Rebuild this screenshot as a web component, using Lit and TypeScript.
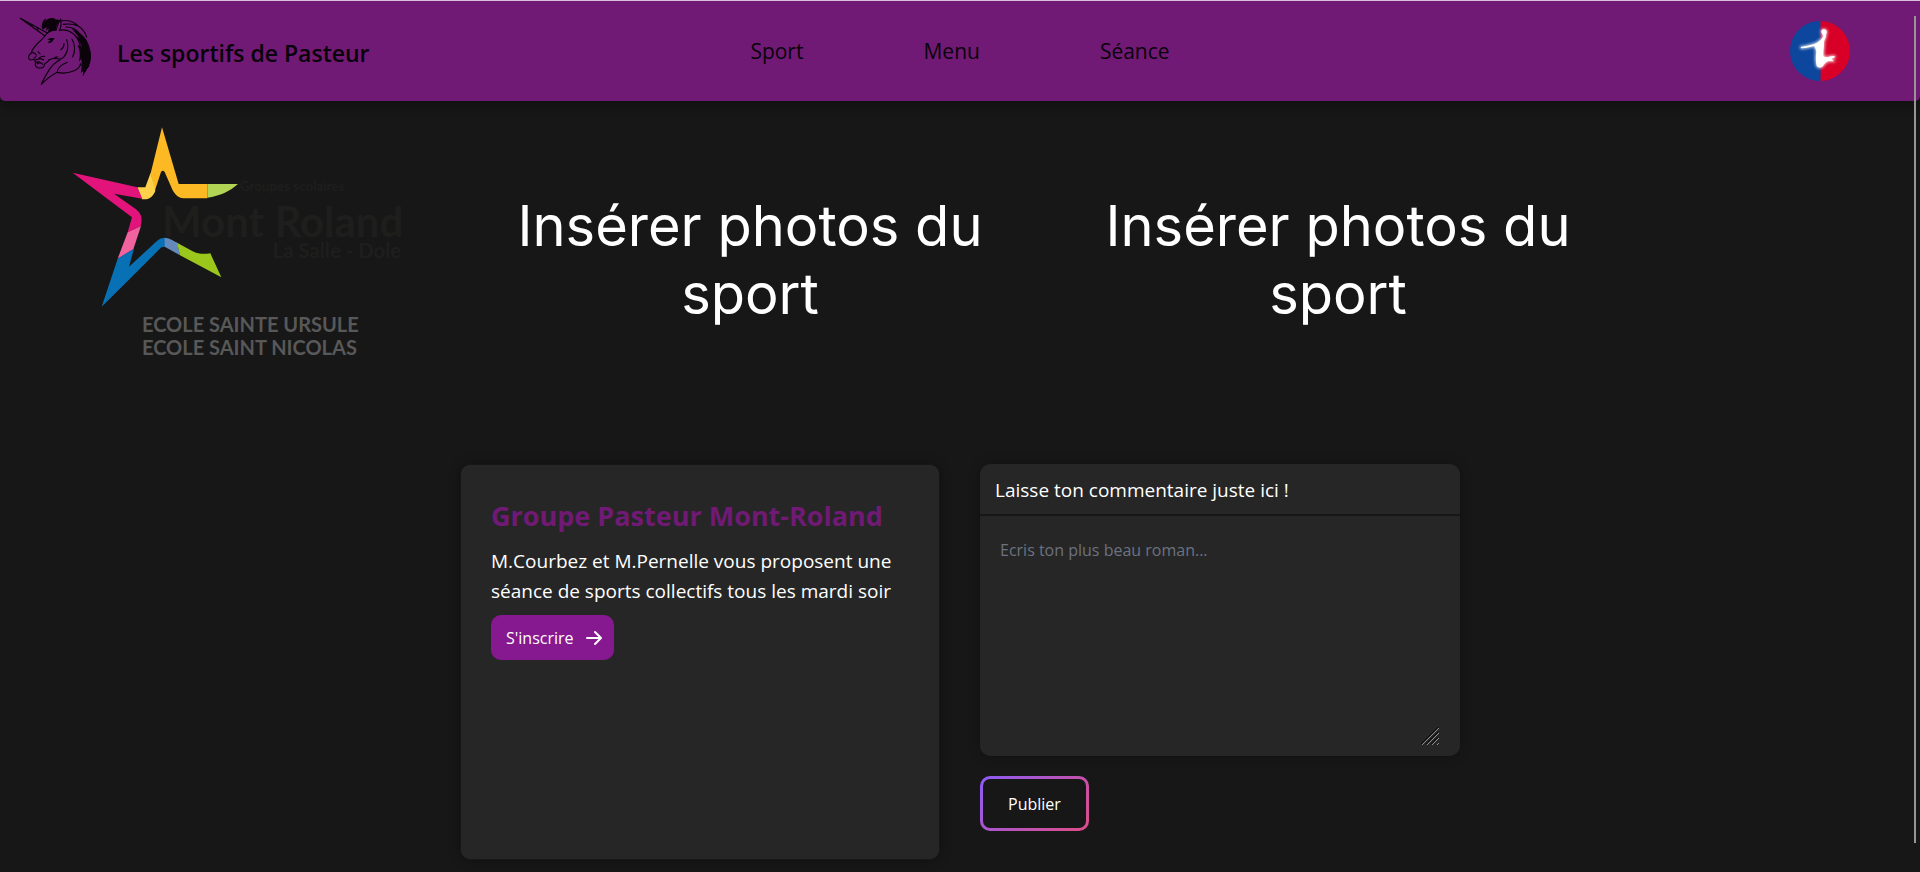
import { LitElement, html, css, svg } from "lit";
import { customElement, property } from "lit/decorators.js";

const unicorn = svg`
  <g fill="none" stroke="#0b020c" stroke-width="3.4" stroke-linecap="round" stroke-linejoin="round">
    <path d="M31 28 L112 72 M31 28 L104 80 M62 44 L66 52 M80 54 L84 64" />
    <path d="M112 72 C104 84 96 92 84 102 C74 112 66 122 64 132 C58 136 54 142 57 150 C62 154 66 154 71 151 C76 153 78 156 76 162 C74 170 79 176 87 177 C97 178 105 174 103 166 C109 162 114 158 118 152" />
    <path d="M64 132 C70 130 76 132 79 138 M84 128 L90 134 M88 146 C94 143 98 141 104 142 M79 152 C86 149 94 149 101 152 M82 164 C88 160 95 161 98 166" />
    <path d="M112 72 C120 66 128 62 138 64 M138 64 C142 50 146 38 152 30 C154 42 154 54 148 64" />
    <path d="M148 64 C164 60 180 66 192 76 C205 88 212 108 214 130" />
    <path d="M118 152 C128 146 140 148 152 150 C160 148 164 142 166 136 M170 92 C176 110 172 128 166 138 M152 122 C158 118 162 112 162 104" />
    <path d="M186 90 C196 108 196 126 188 144" />
    <path d="M150 152 C136 160 126 168 118 182 C108 198 100 212 94 226 C110 210 126 198 142 190" />
    <path d="M142 190 C158 194 176 192 190 186 C202 182 210 174 212 164 M172 160 C152 168 142 178 142 190" />
    <path d="M150 36 C172 32 192 38 206 52 C190 44 176 44 160 46 M206 52 C218 60 226 72 230 84 M168 54 C188 54 202 62 212 78 M212 168 L236 172" />
  </g>
  <g fill="#0b020c">
    <path d="M98 62 C92 50 96 36 108 28 L106 36 C114 26 126 24 138 30 L132 34 C140 30 146 32 150 36 C142 42 138 52 137 64 C130 62 120 66 114 70 L116 58 L108 66 L110 54 Z" />
    <path d="M186 60 C204 66 220 78 230 94 C238 110 244 128 243 144 C242 162 236 176 230 182 C226 190 222 196 218 202 L220 186 L212 192 C216 176 216 164 214 150 L206 158 C212 140 210 122 202 108 L216 114 C210 98 200 86 192 78 L208 86 Z" />
    <path d="M112 92 C118 86 126 86 134 88 L128 96 C124 102 118 104 113 100 L122 93 Z" />
    <path d="M70 146 L80 140 L76 150 Z M78 158 L90 156 L82 166 Z M132 144 L146 142 L136 151 Z" />
  </g>`;

@customElement("site-header")
class SiteHeader extends LitElement {
  static styles = css`
    :host { display: block; }
    .bar {
      display: grid; grid-template-columns: 1fr auto 1fr; align-items: center;
      height: 101px; box-sizing: border-box; padding: 0 10px;
      background: #701a75; border-top: 1px solid #dcbede; border-radius: 0 0 5px 5px;
      box-shadow: 0 6px 10px rgba(0, 0, 0, 0.25);
    }
    .brand {
      display: flex; align-items: center; align-self: start; gap: 17px; width: max-content;
      padding-top: 8px;
      color: #08020a; text-decoration: none; font-size: 23px; line-height: 32px; font-weight: 600;
    }
    .beast { width: 90px; height: 80px; }
    .brand-name { padding-top: 8px; }
    .links { display: flex; gap: 120px; }
    .link { color: #08020a; text-decoration: none; font-size: 21px; line-height: 32px; }
    .profile {
      justify-self: end; display: block; width: 60px; height: 60px; margin: 0 60px 0 0; padding: 0;
      border: 0; border-radius: 50%; background: none;
    }
    .disc { display: block; width: 60px; height: 60px; }
  `;
  render() {
    return html`
      <header class="bar">
        <a class="brand" href="#">
          <svg class="beast" viewBox="0 0 270 240" aria-hidden="true">${unicorn}</svg>
          <span class="brand-name">Les sportifs de Pasteur</span>
        </a>
        <nav class="links">
          ${["Sport", "Menu", "Séance"].map((name) => html`<a class="link" href="#">${name}</a>`)}
        </nav>
        <button class="profile" type="button" aria-label="Profil">
          <svg class="disc" viewBox="90 62 180 180" aria-hidden="true">
            <defs>
              <clipPath id="round"><circle cx="180" cy="152" r="90" /></clipPath>
              <filter id="glow" x="-40%" y="-40%" width="180%" height="180%"><feGaussianBlur stdDeviation="5" /></filter>
              <path id="player" d="M186 99 C182 92 185 87 192 87 C200 88 203 95 198 101 C200 108 194 116 192 124 C193 138 189 150 190 166 C196 173 204 171 212 168 L224 167 L224 171 L214 175 L221 183 L206 182 C198 184 192 192 187 199 C182 203 174 202 170 196 C167 184 167 166 169 154 C168 148 166 142 163 137 C150 140 138 143 124 144 L122 140 C140 137 158 133 171 127 C178 123 186 116 190 108 Z" />
            </defs>
            <g clip-path="url(#round)">
              <rect x="90" y="62" width="92" height="180" fill="#0c479d" />
              <rect x="182" y="62" width="88" height="180" fill="#d80027" />
              <use href="#player" fill="#fff" stroke="#fff" stroke-width="5" filter="url(#glow)" opacity="0.8" />
              <use href="#player" fill="#fff" />
            </g>
          </svg>
        </button>
      </header>`;
  }
}

@customElement("school-logo")
class SchoolLogo extends LitElement {
  static styles = css`
    :host { display: block; width: 360px; flex: none; }
    .art { display: block; width: 100%; }
    .name { font-family: Lato, sans-serif; font-weight: 700; fill: #1e1e1d; }
    .schools { font-family: Lato, sans-serif; font-weight: 700; font-size: 60px; fill: #585858; }
  `;
  render() {
    return html`
      <svg class="art" viewBox="0 0 1080 780" role="img" aria-label="Mont Roland">
        <text class="name" x="540" y="242" font-size="40">Groupes scolaires</text>
        <text class="name" x="306" y="380" font-size="126">Mont Roland</text>
        <text class="name" x="638" y="444" font-size="61">La Salle - Dole</text>
        <path fill="#fdb924" d="M306 52 L356 222 L442 222 L442 265 L370 265 C352 262 342 250 336 236 L314 186 Q308 178 303 186 L284 244 L272 190 Z" />
        <path fill="#ffd04a" d="M272 188 L286 242 C280 258 270 268 254 268 L246 268 L232 232 L256 232 Z" />
        <path fill="#b1d454" d="M442 222 L534 222 C510 244 480 258 442 263 Z" />
        <path fill="#e2147c" d="M38 188 L232 232 L247 266 L162 251 L226 296 C244 310 248 322 242 348 L203 367 L216 322 Z" />
        <path fill="#f0639e" d="M203 367 L243 348 L220 418 L173 446 Z" />
        <path fill="#0870b5" d="M173 446 L222 416 L207 470 L290 394 C298 386 306 383 315 383 L315 410 L304 412 L206 510 L125 590 Z" />
        <path fill="#6389bd" d="M314 383 C326 383 340 392 352 398 L360 436 L314 410 Z" />
        <path fill="#9bc71c" d="M351 398 L398 424 C414 432 432 433 451 430 L484 502 L360 436 Z" />
        <text class="schools" x="246" y="667">ECOLE SAINTE URSULE</text>
        <text class="schools" x="246" y="736">ECOLE SAINT NICOLAS</text>
      </svg>`;
  }
}

@customElement("photo-slot")
class PhotoSlot extends LitElement {
  @property() label = "";
  static styles = css`
    :host { display: block; width: 516px; }
    .caption {
      margin: 0; padding: 0 20px; text-align: center; color: #fff;
      font: 400 56px/68px Inter, sans-serif;
    }
  `;
  render() {
    return html`<p class="caption">${this.label}</p>`;
  }
}

@customElement("group-card")
class GroupCard extends LitElement {
  static styles = css`
    :host { display: block; }
    .card {
      height: 100%; box-sizing: border-box; padding: 31px 30px 30px;
      border: 1px solid #171717; border-radius: 10px;
      background: #262626; box-shadow: 0 0 12px rgba(0, 0, 0, 0.3);
    }
    .title { margin: 0 0 10px; color: #701a75; font-size: 27px; line-height: 40px; font-weight: 700; }
    .text { margin: 0 0 9px; color: #fff; font-size: 19px; line-height: 30px; }
    .join {
      display: inline-flex; align-items: center; gap: 10px; height: 45px; padding: 0 10px 0 15px;
      border: 0; border-radius: 10px; background: #86198f; color: #fff;
      font: inherit; font-size: 16px; line-height: 24px;
    }
    .arrow { width: 20px; height: 20px; }
  `;
  render() {
    return html`
      <article class="card">
        <h2 class="title">Groupe Pasteur Mont-Roland</h2>
        <p class="text">M.Courbez et M.Pernelle vous proposent une séance de sports collectifs tous les mardi soir</p>
        <button class="join" type="button">
          S'inscrire
          <svg class="arrow" viewBox="0 0 20 20" fill="#fff" aria-hidden="true">
            <path fill-rule="evenodd" clip-rule="evenodd" d="M10.293 3.293a1 1 0 011.414 0l6 6a1 1 0 010 1.414l-6 6a1 1 0 01-1.414-1.414L14.586 11H3a1 1 0 110-2h11.586l-4.293-4.293a1 1 0 010-1.414z" />
          </svg>
        </button>
      </article>`;
  }
}

@customElement("comment-form")
class CommentForm extends LitElement {
  static styles = css`
    :host { display: block; }
    .form { display: flex; flex-direction: column; align-items: flex-start; gap: 20px; }
    .panel {
      width: 100%; overflow: hidden; border-radius: 10px; background: #262626;
      box-shadow: 0 0 12px rgba(0, 0, 0, 0.3);
    }
    .label {
      display: block; padding: 11px 15px 9px; border-bottom: 2px solid #171717;
      color: #fff; font-size: 19px; line-height: 30px;
    }
    .field { position: relative; padding: 20px 20px 10px; }
    .input {
      display: block; width: 100%; height: 210px; box-sizing: border-box; padding: 0;
      border: 0; outline: 0; background: transparent; color: #fff; resize: none;
      font: inherit; font-size: 16px; line-height: 28px;
    }
    .input::placeholder { color: #6b7280; opacity: 1; }
    .grip { position: absolute; right: 20px; bottom: 10px; width: 20px; height: 20px; pointer-events: none; }
    .send {
      padding: 3px; border: 0; border-radius: 10px; color: #fff;
      background: linear-gradient(135deg, #8b5cf6, #b854bd 50%, #e04c86);
      font: inherit; font-size: 16px; line-height: 24px;
    }
    .send-face { display: block; padding: 13px 25px 12px; border-radius: 7px; background: #171717; }
  `;
  render() {
    return html`
      <form class="form" @submit=${(e: Event) => e.preventDefault()}>
        <div class="panel">
          <label class="label" for="comment">Laisse ton commentaire juste ici !</label>
          <div class="field">
            <textarea class="input" id="comment" placeholder="Ecris ton plus beau roman..."></textarea>
            <svg class="grip" viewBox="0 0 20 20" aria-hidden="true" fill="none" stroke-width="1">
              <path stroke="#0c0c0c" d="M1 18 L18 1 M6 18 L18 6 M11 18 L18 11" />
              <path stroke="#8f8f8f" d="M2 19 L19 2 M7 19 L19 7 M12 19 L19 12 M17 19 L19 17" />
            </svg>
          </div>
        </div>
        <button class="send" type="submit"><span class="send-face">Publier</span></button>
      </form>`;
  }
}

@customElement("app-root")
class AppRoot extends LitElement {
  static styles = css`
    :host {
      display: block; min-height: 100vh; box-sizing: border-box; padding-bottom: 12px;
      background: #171717; font-family: "Open Sans", "Noto Sans", sans-serif;
    }
    .gallery { display: flex; align-items: flex-start; gap: 72px; padding: 9px 60px 0; }
    .photo { margin-top: 82px; }
    .content {
      display: grid; grid-template-columns: repeat(2, minmax(0, 480px)); justify-content: center;
      gap: 40px; padding-top: 94px;
    }
    .group { min-height: 396px; }
    .scroll {
      position: fixed; top: 16px; right: 4px; bottom: 29px; width: 2px; background: #969696;
    }
  `;
  render() {
    return html`
      <site-header></site-header>
      <main>
        <section class="gallery">
          <school-logo></school-logo>
          <photo-slot class="photo" label="Insérer photos du sport"></photo-slot>
          <photo-slot class="photo" label="Insérer photos du sport"></photo-slot>
        </section>
        <section class="content">
          <group-card class="group"></group-card>
          <comment-form></comment-form>
        </section>
      </main>
      <div class="scroll" aria-hidden="true"></div>`;
  }
}
